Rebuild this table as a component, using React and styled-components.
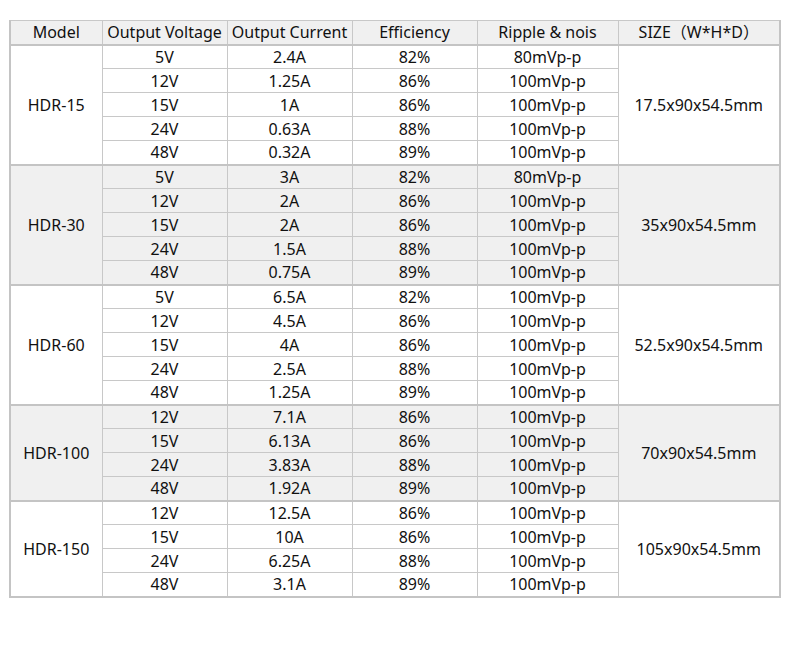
import React from 'react';
import styled, { createGlobalStyle } from 'styled-components';

const GlobalStyle = createGlobalStyle`
  html, body {
    margin: 0;
    padding: 0;
    background: #fff;
  }
  body {
    font-family: "Noto Sans", "Noto Sans CJK SC", sans-serif;
    color: #111;
  }
`;

const Page = styled.div`
  width: 790px;
  height: 672px;
  padding: 20px 11px 0 9px;
  box-sizing: border-box;
`;

const Table = styled.table`
  width: 770px;
  border-collapse: collapse;
  table-layout: fixed;
  font-size: 16px;
  border-left: 2px solid #c4c4c4;
  border-right: 2px solid #c4c4c4;
  border-bottom: 2px solid #c4c4c4;
  border-top: 1px solid #c8c8c8;
`;

const Col = styled.col`
  width: ${({ $w }) => $w}px;
`;

const HeadRow = styled.tr`
  height: 24px;
`;

const HeadCell = styled.th`
  font-weight: 400;
  background: #f0f0f0;
  padding: 0;
  line-height: 18px;
  text-align: center;
  border: 1px solid #c8c8c8;
  white-space: nowrap;
`;

const Row = styled.tr`
  height: 24px;
  background: ${({ $shaded }) => ($shaded ? '#f0f0f0' : '#fff')};
  border-top: ${({ $first }) => ($first ? '2px solid #c4c4c4' : 'none')};
`;

const Cell = styled.td`
  padding: 0;
  line-height: 18px;
  text-align: center;
  vertical-align: middle;
  border: 1px solid #c8c8c8;
  white-space: nowrap;
`;

const groups = [
  {
    model: 'HDR-15',
    size: '17.5x90x54.5mm',
    rows: [
      ['5V', '2.4A', '82%', '80mVp-p'],
      ['12V', '1.25A', '86%', '100mVp-p'],
      ['15V', '1A', '86%', '100mVp-p'],
      ['24V', '0.63A', '88%', '100mVp-p'],
      ['48V', '0.32A', '89%', '100mVp-p'],
    ],
  },
  {
    model: 'HDR-30',
    size: '35x90x54.5mm',
    rows: [
      ['5V', '3A', '82%', '80mVp-p'],
      ['12V', '2A', '86%', '100mVp-p'],
      ['15V', '2A', '86%', '100mVp-p'],
      ['24V', '1.5A', '88%', '100mVp-p'],
      ['48V', '0.75A', '89%', '100mVp-p'],
    ],
  },
  {
    model: 'HDR-60',
    size: '52.5x90x54.5mm',
    rows: [
      ['5V', '6.5A', '82%', '100mVp-p'],
      ['12V', '4.5A', '86%', '100mVp-p'],
      ['15V', '4A', '86%', '100mVp-p'],
      ['24V', '2.5A', '88%', '100mVp-p'],
      ['48V', '1.25A', '89%', '100mVp-p'],
    ],
  },
  {
    model: 'HDR-100',
    size: '70x90x54.5mm',
    rows: [
      ['12V', '7.1A', '86%', '100mVp-p'],
      ['15V', '6.13A', '86%', '100mVp-p'],
      ['24V', '3.83A', '88%', '100mVp-p'],
      ['48V', '1.92A', '89%', '100mVp-p'],
    ],
  },
  {
    model: 'HDR-150',
    size: '105x90x54.5mm',
    rows: [
      ['12V', '12.5A', '86%', '100mVp-p'],
      ['15V', '10A', '86%', '100mVp-p'],
      ['24V', '6.25A', '88%', '100mVp-p'],
      ['48V', '3.1A', '89%', '100mVp-p'],
    ],
  },
];

const headers = ['Model', 'Output Voltage', 'Output Current', 'Efficiency', 'Ripple & nois', 'SIZE（W*H*D）'];
const widths = [92, 125, 125, 125, 141, 162];

export default function App() {
  return (
    <>
      <GlobalStyle />
      <Page>
        <Table>
          <colgroup>
            {widths.map((w, i) => (
              <Col key={i} $w={w} />
            ))}
          </colgroup>
          <thead>
            <HeadRow>
              {headers.map((h) => (
                <HeadCell key={h}>{h}</HeadCell>
              ))}
            </HeadRow>
          </thead>
          <tbody>
            {groups.map((g, gi) =>
              g.rows.map((r, ri) => (
                <Row key={`${g.model}-${ri}`} $shaded={gi % 2 === 1} $first={ri === 0}>
                  {ri === 0 && <Cell rowSpan={g.rows.length}>{g.model}</Cell>}
                  {r.map((v, ci) => (
                    <Cell key={ci}>{v}</Cell>
                  ))}
                  {ri === 0 && <Cell rowSpan={g.rows.length}>{g.size}</Cell>}
                </Row>
              ))
            )}
          </tbody>
        </Table>
      </Page>
    </>
  );
}
